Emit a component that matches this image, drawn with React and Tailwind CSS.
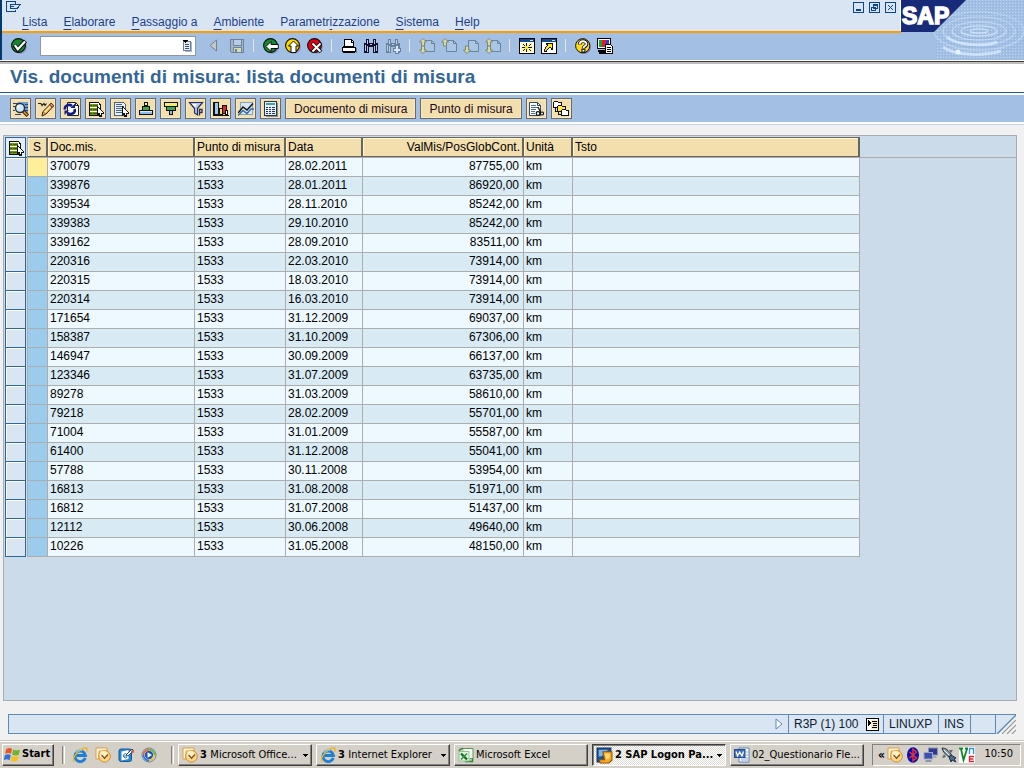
import { useState } from "react"
import { clsx } from "clsx"

const MENU = [
  ["", "L", "ista"],
  ["", "E", "laborare"],
  ["", "P", "assaggio a"],
  ["", "A", "mbiente"],
  ["Parametr", "i", "zzazione"],
  ["", "S", "istema"],
  ["", "H", "elp"],
]

const DOCUMENTS = [
  ["370079", "28.02.2011", "87755,00"],
  ["339876", "28.01.2011", "86920,00"],
  ["339534", "28.11.2010", "85242,00"],
  ["339383", "29.10.2010", "85242,00"],
  ["339162", "28.09.2010", "83511,00"],
  ["220316", "22.03.2010", "73914,00"],
  ["220315", "18.03.2010", "73914,00"],
  ["220314", "16.03.2010", "73914,00"],
  ["171654", "31.12.2009", "69037,00"],
  ["158387", "31.10.2009", "67306,00"],
  ["146947", "30.09.2009", "66137,00"],
  ["123346", "31.07.2009", "63735,00"],
  ["89278", "31.03.2009", "58610,00"],
  ["79218", "28.02.2009", "55701,00"],
  ["71004", "31.01.2009", "55587,00"],
  ["61400", "31.12.2008", "55041,00"],
  ["57788", "30.11.2008", "53954,00"],
  ["16813", "31.08.2008", "51971,00"],
  ["16812", "31.07.2008", "51437,00"],
  ["12112", "30.06.2008", "49640,00"],
  ["10226", "31.05.2008", "48150,00"],
]

const Icon = ({ children, crisp = true, size = 16 }) => (
  <svg
    width={size}
    height={size}
    viewBox="0 0 16 16"
    fill="none"
    shapeRendering={crisp ? "crispEdges" : "auto"}
    className="shrink-0"
    aria-hidden="true"
  >
    {children}
  </svg>
)

/* ---- standard toolbar icons ---- */

const Ball = ({ fill, children }) => (
  <Icon crisp={false}>
    <circle cx="9" cy="9" r="6.8" fill="#8a8fc4" />
    <circle cx="7.5" cy="7.5" r="6.9" fill={fill} stroke="#111" strokeWidth="1.1" />
    {children}
  </Icon>
)

const EnterIcon = () => (
  <Ball fill="#138a2c">
    <path d="M3.200 7l3.500 4.500L14.500 3" stroke="#111" strokeWidth="4.200" />
    <path d="M3.800 7.200l3 4L14 3.600" stroke="#fff" strokeWidth="2.200" />
  </Ball>
)
const BackIcon = () => (
  <Ball fill="#138a2c">
    <path d="M3 8.500l5-5V6.500h7.300v4H8v3z" fill="#fff" stroke="#111" />
  </Ball>
)
const ExitIcon = () => (
  <Ball fill="#ffd800">
    <path d="M8.500 3l5 5h-2.500v6.500H6V8H3.500z" fill="#fff" stroke="#111" />
  </Ball>
)
const CancelIcon = () => (
  <Ball fill="#e00012">
    <path d="M5 5l9 9M14 5l-9 9" stroke="#111" strokeWidth="3.800" />
    <path d="M5.500 5.500l8 8M13.500 5.500l-8 8" stroke="#fff" strokeWidth="1.900" />
  </Ball>
)
const SaveIcon = () => (
  <Icon>
    <path d="M1.500 1.500h13v13h-12l-1-1z" fill="#9fb6cb" stroke="#6f8296" />
    <path d="M4.500 1.500h8v6h-8z" fill="#b7cde6" stroke="#6f8296" />
    <path d="M4.500 9.500h8v5h-8z" fill="#d8dcb8" stroke="#6f8296" />
    <rect x="6" y="11" width="2" height="3" fill="#6f8296" />
  </Icon>
)
const PrintIcon = () => (
  <Icon>
    <path d="M3.500 8.500v-7h7l2 2v5" fill="#fff" stroke="#000" />
    <path d="M10.500 1v3h2" stroke="#000" />
    <path d="M1 9.500h13v4H1z" fill="#fff" stroke="#000" />
    <path d="M2 8.500h11M2 14.500h12" stroke="#000" />
    <path d="M15.500 10v5" stroke="#777aa8" />
  </Icon>
)
const Binoculars = ({ fill, line, more }) => (
  <Icon>
    <path d="M3 1h3v4h4V1h3v4h2v10h-5V9H6v6H1V5h2z" fill={line} />
    <path d="M4 2h1v4H4zM11 2h1v4h-1zM2 7h1v6H2zM4 8h1v6H4zM11 8h1v6h-1zM13 7h1v6h-1zM7 6h2v1H7z" fill={fill} />
    {more && <path d="M10 7h4v3h2v4h-2v2h-4v-2H8v-4h2z" fill={line} />}
    {more && <path d="M11 8h2v3h2v2h-2v2h-2v-2H9v-2h2z" fill="#dbe8f7" />}
  </Icon>
)
const PageIcon = ({ up, down }) => (
  <Icon crisp={false}>
    <path d="M5.500 2.500h7l3 3v8h-10z" fill="#aac6e4" stroke="#67849a" />
    <path d="M12.500 2.500v3h3" stroke="#67849a" />
    {up && <path d="M4 .5l3.500 3.500H5.500v4h-3V4h-2z" fill="#d9d9a2" stroke="#7b8878" />}
    {down && <path d="M4 15.500L7.500 12H5.500V8h-3v4h-2z" fill="#d9d9a2" stroke="#7b8878" />}
  </Icon>
)
const SessionIcon = () => (
  <Icon>
    <rect x=".5" y=".5" width="15" height="15" fill="#fff" stroke="#000" />
    <rect x="1" y="1" width="14" height="3" fill="#0c4d96" />
    <rect x="11" y="2" width="3" height="1" fill="#cfe0f4" />
    <path d="M2 5h12v9H2z" fill="#fff9a8" />
    <g fill="#111">
      <path d="M7 5h1v3H7zM7 11h1v3H7zM3 9h3v1H3zM9 9h4v1H9z" />
      <path d="M4 6h1v1H4zM5 7h1v1H5zM10 7h1v1h-1zM11 6h1v1h-1zM5 11h1v1H5zM4 12h1v1H4zM10 11h1v1h-1zM11 12h1v1h-1z" />
    </g>
    <path d="M6 8h3v3H6z" fill="#ffe81a" />
  </Icon>
)
const ShortcutIcon = () => (
  <Icon>
    <rect x=".5" y=".5" width="15" height="15" fill="#fff" stroke="#000" />
    <rect x="1" y="1" width="14" height="3" fill="#0c4d96" />
    <rect x="11" y="2" width="3" height="1" fill="#cfe0f4" />
    <path d="M5 5h7v7h-2v-2H8v1H7v1H6v2H3v-3h1v-2h1V8h1V7H5z" fill="#111" />
    <path d="M7 6h4v4h-1V9H8v1H7v1H6v1H5v1H4v-2h1V9h1V8h1V7z" fill="#ffe81a" />
  </Icon>
)
const HelpIcon = () => (
  <Icon crisp={false}>
    <circle cx="9" cy="9" r="6.900" fill="#777aa8" />
    <circle cx="7.700" cy="7.700" r="7.100" fill="#ffd91a" stroke="#111" />
    <path d="M4.700 6.500c-.2-4.500 7.100-4.500 6.900-.3 0 2-3.100 2-3.100 4.300" stroke="#111" strokeWidth="3.600" />
    <path d="M4.700 6.200c0-3.900 6.800-3.900 6.800-.2 0 2.200-3 2-3 4.200" stroke="#fff" strokeWidth="1.800" />
    <rect x="6.900" y="11.300" width="3" height="2.700" fill="#fff" stroke="#111" />
  </Icon>
)
const LayoutIcon = () => (
  <Icon>
    <rect x=".5" y=".5" width="13" height="10" fill="#fff" stroke="#000" />
    <rect x="2" y="2" width="3" height="7" fill="#12a72f" />
    <rect x="5" y="2" width="4" height="7" fill="#e8182a" />
    <rect x="9" y="2" width="3" height="7" fill="#2340d0" />
    <path d="M1 12.500h9M2 14.500h7" stroke="#000" strokeWidth="2" />
    <path d="M8.500 6.500h5l2 2v7h-7z" fill="#fff" stroke="#000" />
    <path d="M10 9.500h4M10 11.500h4M10 13.500h4" stroke="#000" />
  </Icon>
)

/* ---- application toolbar icons ---- */

const Cursor = () => (
  <g>
    <path d="M9 5h1v1h1v1h1v1h1v1h1v1h1v1h1v2h-2v3h-3v-2h-1v1H9z" fill="#111" />
    <path d="M10 7h1v1h1v1h1v1h1v1h1v1h-2v2h-1v-2h-2z" fill="#fff" />
  </g>
)

const DetailIcon = () => (
  <Icon crisp={false}>
    <path d="M5 1h10v11H5z" fill="#6d9dd3" />
    <path d="M0 2.500h6M0 5.500h2M0 9.500h2M2 13.500h6M12 3.500h3M12 6.500h3M12 9.500h3" stroke="#2c4675" />
    <circle cx="7" cy="7" r="4.500" fill="#cfeaff" stroke="#25303f" strokeWidth="1.400" />
    <path d="M4.800 7c0-1.500 1-2.500 2.500-2.500" stroke="#fff" strokeWidth="1.500" />
    <path d="M10.300 10.300l4.500 4.500" stroke="#33180a" strokeWidth="3.500" />
    <path d="M10.800 10.800l3.500 3.500" stroke="#f29b2c" strokeWidth="1.600" />
  </Icon>
)
const EditIcon = () => (
  <Icon crisp={false}>
    <path d="M0 2.500h3l1 2 2-2 1 2 1.500-2" stroke="#222" strokeWidth="1.100" />
    <path d="M13 2.500l2.500 2.500-7.500 8-4 2 .8-4.300z" fill="#f7bd56" stroke="#33200b" />
    <path d="M6.500 11.500l6.500-7" stroke="#ffe9a8" strokeWidth="1.300" />
    <path d="M5 10.800l3 2.400" stroke="#b2571c" />
    <path d="M11.500 4l1.700-2 2.500 2.600-1.500 1.800z" fill="#f08a70" stroke="#33200b" strokeWidth=".8" />
  </Icon>
)
const RefreshIcon = () => (
  <Icon crisp={false}>
    <path d="M4.500 1.500h8l3 3v10h-11z" fill="#fff" stroke="#222" />
    <path d="M12.500 1.500v3h3" stroke="#222" />
    <path d="M2 8.500C1 4.500 6 2.500 9 5" stroke="#101a8c" strokeWidth="2.600" />
    <path d="M7.500 7h4.500V2.500z" fill="#101a8c" />
    <path d="M11.500 8c1.500 4-3.500 6.500-7 4" stroke="#101a8c" strokeWidth="2.600" />
    <path d="M6 9.500H1.500V14z" fill="#101a8c" />
  </Icon>
)
const SelectAllIcon = () => (
  <Icon>
    <path d="M1 1h10v1h1v1h1v12H1z" fill="#111" />
    <path d="M2 2h9v2h1v10H2z" fill="#fff" />
    <path d="M2 3h8v3H2zM2 7h8v3H2zM2 11h8v3H2z" fill="#6f970d" />
    <path d="M2 4.500h2M5 4.500h5M2 8.500h2M5 8.500h4M2 12.500h2M5 12.500h4" stroke="#3f5c08" />
    <Cursor />
  </Icon>
)
const DeselectIcon = () => (
  <Icon>
    <path d="M1.500 1.500h9l2 2v11h-11z" fill="#e9f1fa" stroke="#4a618c" />
    <path d="M3 3.500h6M3 5.500h8M3 7.500h6M3 9.500h6M3 11.500h6" stroke="#4a618c" />
    <Cursor />
  </Icon>
)
const SortAscIcon = () => (
  <Icon>
    <path d="M6.500 1.500h3v3h-3z" fill="#fff5a0" stroke="#111" />
    <path d="M4.500 5.500h7v4h-7z" fill="#4aa24c" stroke="#111" />
    <path d="M1.500 9.500h13v4h-13z" fill="#8fbdf0" stroke="#111" />
    <path d="M2 10.500h12" stroke="#d8ebff" />
  </Icon>
)
const SortDescIcon = () => (
  <Icon>
    <path d="M1.500 1.500h13v4h-13z" fill="#f4ef74" stroke="#111" />
    <path d="M3.500 5.500h9v4h-9z" fill="#4aa24c" stroke="#111" />
    <path d="M6.500 9.500h3v4h-3z" fill="#8fbdf0" stroke="#111" />
  </Icon>
)
const FilterIcon = () => (
  <Icon crisp={false}>
    <path d="M1.500 1.500h13L9.500 7.500V14l-3-2V7.500z" fill="#b9c7ea" stroke="#27305e" strokeWidth="1.200" />
    <path d="M11.500 14.500v-6h2.500v3h-2.500" stroke="#27305e" strokeWidth="1.300" />
    <path d="M4 3h5L7 6z" fill="#fff" />
  </Icon>
)
const ChartIcon = () => (
  <Icon>
    <path d="M.5 1v13.500H16" stroke="#111" />
    <rect x="1.500" y="1.500" width="4" height="12" fill="#9cc8f1" stroke="#111" />
    <rect x="6.500" y="7.500" width="3" height="6" fill="#f2e347" stroke="#111" />
    <rect x="9.500" y="4.500" width="4" height="8" fill="#e02a2a" stroke="#111" />
    <rect x="12.500" y="9.500" width="2" height="4" fill="#fff" stroke="#111" />
  </Icon>
)
const TrendIcon = () => (
  <Icon crisp={false}>
    <rect x="2.500" y="1.500" width="12" height="12" fill="#d5e6f2" stroke="#8ea3b8" />
    <path d="M0 12l5-6 4 3 6-6.500" stroke="#111" strokeWidth="1.400" />
    <path d="M0 14.500l5-5 4 3 4-4.500h3" stroke="#2f6fb0" strokeWidth="1.400" />
  </Icon>
)
const CalcIcon = () => (
  <Icon>
    <rect x="1.500" y=".5" width="12" height="14" fill="#e6f1fb" stroke="#243750" />
    <rect x="3" y="2" width="9" height="2" fill="#3ea2a8" />
    <path
      d="M3 6.500h2M6 6.500h2M9 6.500h3M3 8.500h2M6 8.500h2M9 8.500h3M3 10.500h2M6 10.500h2M9 10.500h3M3 12.500h2M6 12.500h2M9 12.500h3"
      stroke="#243750"
    />
    <path d="M14.500 2v14M3 15.500h12" stroke="#8d8d8d" />
  </Icon>
)
const VariantIcon = () => (
  <Icon crisp={false}>
    <path d="M1.500 1.500h8l3 3v10h-11z" fill="#fff" stroke="#31486b" />
    <path d="M9.500 1.500v3h3" stroke="#31486b" />
    <path d="M3 4.500h5M3 6.500h7M3 8.500h5M3 10.500h4M3 12.500h4" stroke="#496fa0" />
    <path d="M10 6l3 6" stroke="#111" strokeWidth="1.200" />
    <circle cx="10" cy="12.500" r="1.800" fill="#fff" stroke="#111" strokeWidth="1.200" />
    <circle cx="14" cy="12.500" r="1.500" fill="#fff" stroke="#111" strokeWidth="1.200" />
  </Icon>
)
const HierarchyIcon = () => (
  <Icon>
    <path d="M2.500 5v5h3M5.500 9v4h3" stroke="#111" />
    <path d="M.5 1.500l1-1h3l1 1h3v5h-8z" fill="#fff" stroke="#111" />
    <path d="M4.500 5.500l1-1h3l1 1h3v5h-8z" fill="#ffe642" stroke="#111" />
    <path d="M8.500 9.500l1-1h3l1 1h2v5h-7z" fill="#fff" stroke="#111" />
  </Icon>
)

/* ---- taskbar icons ---- */

const WindowsFlag = () => (
  <Icon crisp={false} size={17}>
    <path d="M2 3c2-1.500 4-1.500 5.500-.2L6.500 7.500C5 6.300 3 6.300 1 7.500z" fill="#ee5525" />
    <path d="M8.500 3.200c2 1.200 4 1.200 6.500 0L14 8c-2 1.200-4 1.200-6.300.1z" fill="#6fb52a" />
    <path d="M.8 8.700c2-1.300 4-1.300 5.500-.1l-1 4.700c-1.700-1.200-3.500-1.200-5.500.1z" fill="#2f6fd8" />
    <path d="M7.400 9.200c2 1.200 4 1.200 6.300 0l-1 4.700c-2 1.200-4 1.200-6.300 0z" fill="#f8bf1c" />
  </Icon>
)
const IeIcon = () => (
  <Icon crisp={false}>
    <path d="M13.300 11A5.300 5.300 0 1 1 13.500 8.500H4.500" stroke="#1c7fd4" strokeWidth="2.800" />
    <path d="M2.500 14.800C-1.500 14 5 2.500 13 1c2.500-.4 2.500 1.500 1.500 3.500" stroke="#f2b51c" strokeWidth="1.400" />
    <path d="M4 5.500C5 3.500 8 3 10 3.800" stroke="#8fd0fa" />
  </Icon>
)
const OutlookIcon = () => (
  <Icon crisp={false}>
    <path d="M1 1h11v3H4v8H1z" fill="#fff6e2" stroke="#e79a35" />
    <circle cx="9.500" cy="9.300" r="5.800" fill="#fbd58a" stroke="#d58c27" />
    <circle cx="8.500" cy="7.500" r="3.800" fill="#fff0c4" />
    <path d="M6.500 8l3 3.200L13 7.500" stroke="#7d4c18" strokeWidth="1.300" />
  </Icon>
)
const DesktopIcon = () => (
  <Icon crisp={false}>
    <rect x="1" y="2" width="12.500" height="12.500" rx="2" fill="#2787cf" stroke="#145a9d" />
    <path d="M3.500 4.500l7-1.500v9l-7 1.500z" fill="#fff" />
    <path d="M9 7.500a2 2 0 1 0 0 2.500M5 9h4" stroke="#2376be" />
    <path d="M8 8l6-6 1.500 1.500L10 9z" fill="#fff" stroke="#28527d" />
    <path d="M13.500 3.500l2 2" stroke="#e7492b" strokeWidth="2" />
  </Icon>
)
const MediaIcon = () => (
  <Icon crisp={false}>
    <circle cx="8" cy="8" r="7" fill="#fff" stroke="#5d7ca9" />
    <path d="M8 2.500a5.500 5.500 0 0 1 5.500 5.500" stroke="#6ab62d" strokeWidth="1.800" />
    <path d="M2.500 8A5.500 5.500 0 0 1 8 2.500" stroke="#e9632b" strokeWidth="1.800" />
    <path d="M2.500 8A5.500 5.500 0 0 0 8 13.500" stroke="#3372d2" strokeWidth="1.800" />
    <path d="M8 13.500A5.500 5.500 0 0 0 13.500 8" stroke="#f1bd2a" strokeWidth="1.800" />
    <circle cx="8" cy="8" r="4.200" fill="#1d55b2" />
    <path d="M6.500 5.200L11 8l-4.500 2.800z" fill="#fff" />
  </Icon>
)
const ExcelIcon = () => (
  <Icon crisp={false}>
    <path d="M5 1.500h10v10h-3" fill="#fff" stroke="#4a9d4d" />
    <path d="M1 4C2 2 3 1.500 5 1.500M7 14.500h7.500v-3" stroke="#2c8736" strokeWidth="1.500" />
    <rect x="1" y="4.500" width="10" height="9.500" fill="#e2f3df" stroke="#8cc58a" />
    <path d="M3 6.500l6 6" stroke="#176d28" strokeWidth="2.400" />
    <path d="M9 6.500l-6 6" stroke="#38963b" strokeWidth="1.600" />
  </Icon>
)
const LogonIcon = () => (
  <Icon crisp={false} size={17}>
    <path d="M1 1h13v4L6 14H1z" fill="#1c5198" stroke="#0c2f63" />
    <path d="M2.500 2.500h9L5 9H2.500z" fill="#7bb4e6" />
    <path d="M6.500 4.500h8.500v8l-3 2.500H4l-1-3h5z" fill="#f7a81d" stroke="#8c520b" />
    <path d="M8 6h5v4l-3 2z" fill="#ffd971" />
  </Icon>
)
const WordIcon = () => (
  <Icon crisp={false}>
    <path d="M5 1h10v14H5z" fill="#fff" stroke="#5a82bd" />
    <path d="M12 5h2M12 8h2M7 13h7M7 11h7" stroke="#8aa8d5" />
    <rect x=".5" y="2.500" width="10.500" height="8" fill="#3b6fb8" stroke="#214c8c" />
    <path d="M2 4.500l1.500 4.500L5.700 5 8 9l1.500-4.500" stroke="#fff" strokeWidth="1.300" />
  </Icon>
)
const BluetoothIcon = () => (
  <Icon crisp={false}>
    <ellipse cx="8" cy="8" rx="6" ry="7.800" fill="#0612b0" />
    <path d="M4.500 5l7 6L8 13.800V2.200L11.500 5l-7 6" stroke="#f03030" strokeWidth="1.400" />
  </Icon>
)
const NetworkIcon = () => (
  <Icon crisp={false}>
    <rect x="5.500" y="1" width="9" height="7" fill="#2c3b8f" stroke="#8b93b8" />
    <path d="M9 9h4l1 2H8z" fill="#a3a8bd" />
    <rect x="1" y="5.500" width="8.500" height="6.500" fill="#3c4fae" stroke="#9fa6c6" />
    <path d="M3 13h5l1 2H2z" fill="#8f95ae" />
  </Icon>
)
const RocketIcon = () => (
  <Icon crisp={false}>
    <path d="M1 1c4 0 6 2 9 6l1 4-3-1C4 7 2 5 1 1z" fill="#8a9aa2" stroke="#28343a" />
    <path d="M3 7l-2 4 4-1zM8 3h4l-2 3z" fill="#5c6b73" />
    <path d="M10 8l5 3-2 1 2 3-4-2-1 2-2-5z" fill="#506b92" stroke="#1f2e44" />
    <path d="M3 3l5 5" stroke="#e8f2f5" />
  </Icon>
)
const VncIcon = () => (
  <Icon crisp={false}>
    <rect width="16" height="16" fill="#fff" />
    <path d="M0 1.500h4M6 1.500h3M2 2l2.500 11L8 2" stroke="#0b8a22" strokeWidth="1.800" />
    <path d="M10.500 7V1.500h4V7" stroke="#2d8ee2" strokeWidth="1.300" />
    <path d="M15 9.500h-4.500v5H15M10.500 12h4" stroke="#df2436" strokeWidth="1.300" />
  </Icon>
)

const STANDARD_TOOLBAR = [
  [["Salvare", <SaveIcon />]],
  [
    ["Indietro", <BackIcon />],
    ["Fine", <ExitIcon />],
    ["Annullare", <CancelIcon />],
  ],
  [
    ["Stampare", <PrintIcon />],
    ["Ricercare", <Binoculars fill="#bcc4e8" line="#10102c" />],
    ["Continuare ricerca", <Binoculars fill="#b9d0ea" line="#6a8299" more />],
  ],
  [
    ["Prima pagina", <PageIcon up down />],
    ["Pagina precedente", <PageIcon up />],
    ["Pagina successiva", <PageIcon down />],
    ["Ultima pagina", <PageIcon up down />],
  ],
  [
    ["Nuovo modo", <SessionIcon />],
    ["Collegamento", <ShortcutIcon />],
  ],
  [
    ["Guida", <HelpIcon />],
    ["Adattare layout", <LayoutIcon />],
  ],
]

const APP_TOOLBAR = [
  ["Dettaglio", <DetailIcon />],
  ["Modificare", <EditIcon />],
  ["Aggiornare", <RefreshIcon />],
  ["Selezionare tutto", <SelectAllIcon />],
  ["Annullare selezione", <DeselectIcon />],
  ["Ordine crescente", <SortAscIcon />],
  ["Ordine decrescente", <SortDescIcon />],
  ["Filtro", <FilterIcon />],
  ["Grafico", <ChartIcon />],
  ["Andamento", <TrendIcon />],
  ["Calcolare", <CalcIcon />],
]

const ToolButton = ({ label, children }) => (
  <button
    type="button"
    aria-label={label}
    className="flex h-[21px] min-w-[21px] items-center justify-center border border-[#6b6960] bg-[#f3dfae] shadow-[inset_0_0_0_1px_#f7e9c6]"
  >
    {children}
  </button>
)

const WindowButton = ({ label, children }) => (
  <button type="button" aria-label={label} className="size-[11px]">
    <svg width="11" height="11" viewBox="0 0 11 11" fill="none" stroke="#0b468c" shapeRendering="crispEdges">
      <rect x=".5" y=".5" width="10" height="10" />
      {children}
    </svg>
  </button>
)

const RIPPLES = [
  [9, 2, 0.7],
  [18, 5, 0.6],
  [27, 9, 0.45],
  [36, 14, 0.35],
  [45, 19, 0.3],
]

const SapCorner = () => (
  <svg width="123" height="60" viewBox="0 0 123 60" className="shrink-0 bg-[#a3c0e4]" role="img" aria-label="SAP">
    <defs>
      <pattern id="grain" width="3" height="3" patternUnits="userSpaceOnUse">
        <rect width="1" height="1" fill="#bcd5f2" />
        <rect x="2" y="1" width="1" height="1" fill="#93b4dd" />
      </pattern>
    </defs>
    <path d="M65 0h58v60H34V32z" fill="url(#grain)" />
    {RIPPLES.map(([rx, ry, opacity]) => (
      <g key={rx} fill="none">
        <ellipse cx="78" cy="31" rx={rx} ry={ry} stroke="#e4f1ff" strokeWidth="1.5" opacity={opacity} />
        <ellipse cx="78" cy="33" rx={rx + 3} ry={ry + 1} stroke="#7fa4d4" opacity={opacity / 2} />
      </g>
    ))}
    <path d="M46 37c9 8 36 10 50 5M42 47c12 9 42 9 58 4" fill="none" stroke="#d9ebff" strokeWidth="3" opacity=".75" />
    <circle cx="57" cy="52" r="2.500" fill="#e7f3ff" />
    <path d="M0 0h65L33 32H0z" fill="#182b78" />
    <text
      x="1"
      y="24"
      fill="#fff"
      stroke="#fff"
      strokeWidth="1.500"
      className="font-['Liberation_Sans',Arial,sans-serif] text-[23px] font-bold"
    >
      SAP
    </text>
  </svg>
)

const Header = () => (
  <header className="flex border-b border-white bg-[#a3c0e4]">
    <div className="min-w-0 flex-1 border-l-2 border-[#003a6e]">
      <div className="flex h-[31px] justify-between border-r border-white bg-[#d9e5f3]">
        <div className="pl-1">
          <svg width="16" height="13" viewBox="0 0 16 13" fill="none" stroke="#0b468c" shapeRendering="crispEdges" className="block">
            <path d="M9.500 1.500h-9v10h9v-2M9.500 1v3h5l-3 4h-7V4.500h5" />
            <path d="M5 6.500h3" />
          </svg>
          <nav className="flex gap-4 pl-4 text-[12px] leading-[18px] text-[#1b3f8b]">
            {MENU.map(([before, key, after]) => (
              <button key={before + key + after} type="button">
                {before}
                <span className="underline underline-offset-[3px]">{key}</span>
                {after}
              </button>
            ))}
          </nav>
        </div>
        <div className="flex gap-[5px] pt-[2px] pr-1">
          <WindowButton label="Ridurre">
            <path d="M3 7.500h5M3 8.500h5" />
          </WindowButton>
          <WindowButton label="Ripristinare">
            <path d="M4.500 2.500h4v4h-4zM4 3.500h5M2.500 5.500h4v3h-4zM2 5.500h5" />
          </WindowButton>
          <WindowButton label="Chiudere">
            <path d="M3 3l5 5M8 3l-5 5" />
          </WindowButton>
        </div>
      </div>
      <div className="flex h-[29px] items-center border-t-2 border-[#ff9c00] pb-[2px] pl-[9px]">
        <button type="button" aria-label="Enter">
          <EnterIcon />
        </button>
        <div className="ml-[13px] flex h-5 w-[156px] items-center border border-[#8f979f] bg-white pr-[3px]">
          <input aria-label="Comando" className="h-full min-w-0 flex-1 px-1 text-[12px] outline-none" />
          <svg width="10" height="12" viewBox="0 0 10 12" fill="none" shapeRendering="crispEdges">
            <path d="M1.500 1.500h7v9h-7z" fill="#e6eef7" stroke="#6a7f95" />
            <path d="M3 4.500h4M3 6.500h4M3 8.500h4" stroke="#3a5370" />
            <path d="M9.500 2v9.500H3" stroke="#a9b8c8" />
            <path d="M0 0h6L3 3z" fill="#000" />
          </svg>
        </div>
        <button type="button" aria-label="Nascondere campo comando" className="mr-[11px] ml-[13px]">
          <svg width="9" height="13" viewBox="0 0 9 13">
            <path d="M7.500 1v11L1 6.500z" fill="#c4c8c4" stroke="#75828d" />
          </svg>
        </button>
        {STANDARD_TOOLBAR.map((group, i) => (
          <div key={i} className="flex items-center">
            {i > 0 && <span className="mr-[9px] ml-2 h-[13px] w-px bg-[#e9e6dc]" />}
            <div className="flex gap-[6px]">
              {group.map(([label, icon]) => (
                <button key={label} type="button" aria-label={label}>
                  {icon}
                </button>
              ))}
            </div>
          </div>
        ))}
      </div>
    </div>
    <SapCorner />
  </header>
)

const headCell =
  "h-5 overflow-hidden border-t border-r-2 border-b border-[#66665f] bg-[#f3dfae] px-[2px] font-normal whitespace-nowrap shadow-[inset_1px_1px_0_#fdf6cf]"
const bodyCell = "border-r border-b border-[#adadad] px-[2px] pb-[2px] whitespace-nowrap"

const DocumentTable = ({ selected, onSelect }) => (
  <table className="w-full table-fixed border-separate border-spacing-0 text-[12px] leading-4 text-black">
    <colgroup>
      <col className="w-[22px]" />
      <col className="w-[21px]" />
      <col className="w-[147px]" />
      <col className="w-[91px]" />
      <col className="w-[77px]" />
      <col className="w-[161px]" />
      <col className="w-[49px]" />
      <col className="w-[287px]" />
      <col />
    </colgroup>
    <thead>
      <tr>
        <th className="p-0">
          <button
            type="button"
            aria-label="Selezionare tutte le righe"
            className="flex h-5 w-[21px] items-center justify-center border border-b-0 border-[#2d6698] bg-[#e4edf8]"
          >
            <SelectAllIcon />
          </button>
        </th>
        <th className={clsx(headCell, "border-l border-l-[#adadad] text-center")}>S</th>
        <th className={clsx(headCell, "text-left")}>Doc.mis.</th>
        <th className={clsx(headCell, "text-left")}>Punto di misura</th>
        <th className={clsx(headCell, "text-left")}>Data</th>
        <th className={clsx(headCell, "text-right")}>ValMis/PosGlobCont.</th>
        <th className={clsx(headCell, "text-left")}>Unità</th>
        <th className={clsx(headCell, "text-left")}>Tsto</th>
        <td />
      </tr>
      <tr>
        <td className="h-px border-x border-[#2d6698] bg-[#2d6698] p-0" />
        <td colSpan={8} className="h-px bg-[#adadad] p-0" />
      </tr>
    </thead>
    <tbody>
      {DOCUMENTS.map(([doc, date, value], i) => (
        <tr key={doc} className={i % 2 ? "bg-[#d8ebf4]" : "bg-[#edf9fe]"}>
          <td className="bg-[#cbdbea] p-0">
            <button
              type="button"
              aria-label={`Riga ${doc}`}
              onClick={() => onSelect(i)}
              className="block h-[19px] w-[21px] border-x border-b border-[#2d6698] bg-[#d9e5f3] shadow-[inset_1px_1px_0_#fff]"
            />
          </td>
          <td className={clsx(bodyCell, "border-l", i === selected ? "bg-[#ffee9a]" : "bg-[#9bccee]")} />
          <td className={bodyCell}>{doc}</td>
          <td className={bodyCell}>1533</td>
          <td className={bodyCell}>{date}</td>
          <td className={clsx(bodyCell, "text-right")}>
            <span className="pr-[2px]">{value}</span>
          </td>
          <td className={bodyCell}>km</td>
          <td className={bodyCell} />
          <td className="bg-[#cbdbea]" />
        </tr>
      ))}
    </tbody>
  </table>
)

const StatusBar = () => (
  <footer className="mt-[13px] mb-[6px] flex h-5 px-2 text-[12px] text-[#101c30]">
    <div className="flex flex-1 items-stretch border border-r-0 border-[#5a8ab5] bg-[#d9e5f3]">
      <div className="flex flex-1 items-center justify-end pr-1">
        <svg width="9" height="12" viewBox="0 0 9 12">
          <path d="M1 1v10l6-5z" fill="#fff" stroke="#5a8ab5" />
        </svg>
      </div>
      <div className="flex w-[95px] items-center justify-between border-l border-[#5a8ab5] pr-1 pl-[5px]">
        R3P (1) 100
        <svg width="13" height="13" viewBox="0 0 13 13" fill="none" shapeRendering="crispEdges">
          <rect x=".5" y=".5" width="12" height="12" fill="#fff" stroke="#000" />
          <path d="M5 2h7v9H5z" fill="#f4ecb0" />
          <path d="M6 3.500h5M7 5.500h4M7 7.500h4M6 9.500h5" stroke="#000" />
          <path d="M2 2l3 3-3 3z" fill="#000" />
        </svg>
      </div>
      <div className="flex w-[55px] items-center border-l border-[#5a8ab5] pl-[5px]">LINUXP</div>
      <div className="flex w-8 items-center border-l border-[#5a8ab5] pl-[5px]">INS</div>
      <div className="w-[25px] border-l border-[#5a8ab5]" />
      <div className="border-l border-[#5a8ab5]" />
    </div>
    <svg width="20" height="20" viewBox="0 0 20 20" fill="none">
      <path d="M0 0h19L1 20H0z" fill="#d9e5f3" />
      <path d="M0 .5h20" stroke="#5a8ab5" />
      <path d="M20 1L1 20" stroke="#5a8ab5" strokeWidth="1.500" />
      <path d="M20 6L6 20M20 11l-9 9M20 16l-4 4" stroke="#9a9a9a" strokeWidth="1.200" />
    </svg>
  </footer>
)

const raised =
  "border border-t-white border-l-white border-r-[#404040] border-b-[#404040] bg-[#d4d0c8] shadow-[inset_-1px_-1px_0_#808080]"
const sunken =
  "border border-t-[#404040] border-l-[#404040] border-r-white border-b-white bg-[repeating-conic-gradient(#fff_0_25%,#dedbd4_0_50%)] bg-[length:2px_2px] shadow-[inset_1px_1px_0_#808080]"

const TASKS = [
  { count: "3", title: "Microsoft Office...", icon: <OutlookIcon />, menu: true },
  { count: "3", title: "Internet Explorer", icon: <IeIcon />, menu: true },
  { title: "Microsoft Excel", icon: <ExcelIcon /> },
  { count: "2", title: "SAP Logon Pa...", icon: <LogonIcon />, menu: true, active: true },
  { title: "02_Questionario Fle...", icon: <WordIcon /> },
]

const Divider = () => <span className="h-[18px] w-[3px] border-r border-l border-r-white border-l-[#808080]" />

const TaskBar = () => (
  <div className="flex h-7 items-center border-t border-[#c9c6bf] bg-[#d4d0c8] pr-[3px] pl-[2px] font-['DejaVu_Sans_Condensed','DejaVu_Sans',sans-serif] text-[11px] text-black shadow-[inset_0_1px_0_#fff]">
    <button type="button" className={clsx(raised, "flex h-[22px] w-[52px] items-center gap-px pl-px font-bold")}>
      <WindowsFlag />
      Start
    </button>
    <div className="flex items-center pl-2">
      <Divider />
      <div className="flex gap-[7px] pr-[14px] pl-[7px]">
        <button type="button" aria-label="Internet Explorer"><IeIcon /></button>
        <button type="button" aria-label="Outlook"><OutlookIcon /></button>
        <button type="button" aria-label="Mostra desktop"><DesktopIcon /></button>
        <button type="button" aria-label="Windows Media Player"><MediaIcon /></button>
      </div>
      <Divider />
    </div>
    <div className="ml-1 flex min-w-0 flex-1 gap-1">
      {TASKS.map((task) => (
        <button
          key={task.title}
          type="button"
          className={clsx(
            "flex h-[22px] min-w-0 flex-1 items-center gap-[2px] px-[3px] pt-px whitespace-nowrap",
            task.active ? sunken : raised,
            task.active && "font-bold"
          )}
        >
          {task.icon}
          <span className="min-w-0 flex-1 overflow-hidden text-left">
            {task.count && <b>{task.count} </b>}
            {task.title}
          </span>
          {task.menu && (
            <svg width="5" height="3" viewBox="0 0 5 3" shapeRendering="crispEdges" className="shrink-0">
              <path d="M0 0h5L2.500 3z" fill="#000" />
            </svg>
          )}
        </button>
      ))}
    </div>
    <div className="ml-2 flex h-[22px] w-[149px] items-center gap-[2px] border border-[#808080] border-r-white border-b-white pr-[7px] pl-[5px]">
      <button type="button" aria-label="Mostra icone nascoste" className="text-[12px] font-bold">«</button>
      <OutlookIcon />
      <BluetoothIcon />
      <NetworkIcon />
      <RocketIcon />
      <VncIcon />
      <span className="flex-1 text-right">10:50</span>
    </div>
  </div>
)

const App = () => {
  const [selected, setSelected] = useState(0)

  return (
    <div className="flex min-h-screen flex-col bg-[#f1f1f1] font-['Liberation_Sans',Arial,sans-serif]">
      <Header />
      <div className="flex h-[31px] items-center border-t border-[#404040] bg-white pl-[10px] shadow-[inset_0_2px_0_#bdbdbd]">
        <h1 className="text-[19px] leading-[24px] font-bold text-[#336699]">
          Vis. documenti di misura: lista documenti di misura
        </h1>
      </div>
      <div className="border-y border-t-[#1f5a94] border-b-[#c5d6e8] bg-white py-[2px]">
        <div className="flex h-[27px] items-center gap-1 bg-[#a3c0e4] pl-[10px] text-[12px] text-[#1c0a1c]">
          {APP_TOOLBAR.map(([label, icon]) => (
            <ToolButton key={label} label={label}>
              {icon}
            </ToolButton>
          ))}
          <ToolButton>
            <span className="px-2">Documento di misura</span>
          </ToolButton>
          <ToolButton>
            <span className="px-2">Punto di misura</span>
          </ToolButton>
          <ToolButton label="Scegliere variante">
            <VariantIcon />
          </ToolButton>
          <ToolButton label="Gerarchia">
            <HierarchyIcon />
          </ToolButton>
        </div>
      </div>
      <main className="mt-[10px] mr-[7px] ml-[3px] flex-1 border border-[#a9adb3] bg-[#cbdbea] p-px pr-0">
        <DocumentTable selected={selected} onSelect={setSelected} />
      </main>
      <StatusBar />
      <TaskBar />
    </div>
  )
}

export default App
